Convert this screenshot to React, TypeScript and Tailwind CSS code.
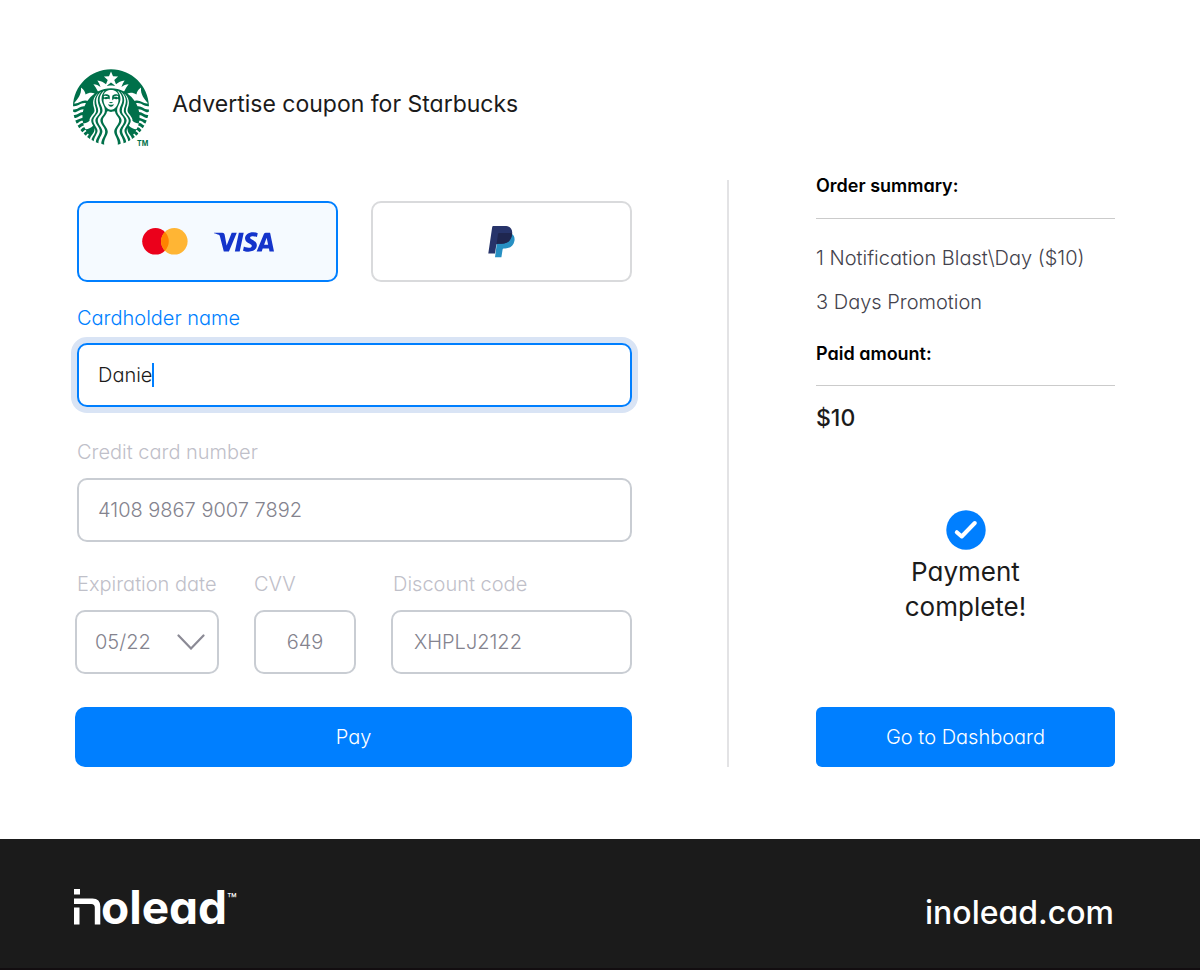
import { useState } from "react";
import { SiStarbucks, SiVisa } from "react-icons/si";

const fieldBox =
  "h-16 w-full rounded-[10px] border-2 border-[#c9cdd3] bg-white text-xl font-light text-[#84838e] outline-none";
const labelText = "text-xl leading-6 font-light text-[#bfc0c9]";

function Mastercard() {
  return (
    <svg viewBox="0 0 46 28" className="h-7 w-[46px]" aria-hidden="true">
      <circle cx="13.5" cy="13.300" r="13.3" fill="#eb001b" />
      <circle cx="32.3" cy="13.300" r="13.3" fill="#ffb534" />
      <path d="M22.9 3.900a13.3 13.3 0 0 1 0 18.8a13.3 13.3 0 0 1 0-18.8z" fill="#ff8200" />
    </svg>
  );
}

function PayPal() {
  return (
    <svg viewBox="0 0 27 32" className="h-8 w-[27px]" aria-hidden="true">
      <path d="M23.6 7.700c2.600 1.400 3.400 4.300 2.800 7.300-1 5-4.600 7.400-9.100 7.400h-1.500c-.7 0-1.100.3-1.200 1l-1.200 7.800H7l.6-4.500L9.300 14z" fill="#2790c3" />
      <path d="M5.200 0h11.400c5.400 0 8.300 2.700 7.500 8.300-.9 6.500-4.900 9.400-10.800 9.400H9.800c-.9 0-1.400.5-1.500 1.200L7 27.500H.3L4.200 1c.1-.6.500-1 1-1z" fill="#27346a" />
      <path d="M11.200 7h12.800c.1.500.1.900 0 1.500-.9 6.600-4.900 9.200-10.700 9.200H9.800c-.5 0-.9.200-1.200.5L10 8.100c.1-.7.500-1.100 1.200-1.100z" fill="#1f264f" />
    </svg>
  );
}

function BrandMark() {
  return (
    <svg viewBox="0 0 27 36" className="h-9 w-[27px]" fill="#fff" aria-hidden="true">
      <rect x="0" y="0" width="6" height="5.500" />
      <path d="M0 9.500h18.500q7.800 0 7.800 8V35.500h-5.500V18.500q0-3.600-3.600-3.600H0z" />
      <rect x="0" y="18.500" width="5.500" height="17" />
    </svg>
  );
}

export default function App() {
  const [name, setName] = useState("Danie");
  const [method, setMethod] = useState("card");
  const methodBox =
    "flex h-[81px] flex-1 items-center justify-center rounded-[10px] border-2";
  const active = "border-[#007fff] bg-[#f5faff]";
  const idle = "border-[#d9dadc] bg-white";

  return (
    <div className="min-h-screen bg-white font-['Inter','Liberation_Sans',sans-serif] text-[#1b1b1b] [font-feature-settings:'cv11']">
      <header className="flex items-start pt-[69px] pl-[73px]">
        <div className="flex items-end">
          <SiStarbucks className="size-[76px] text-[#00704a]" aria-label="Starbucks" />
          <span className="-mb-0.5 -ml-3 text-[7px] leading-[6px] font-bold text-[#00704a]">TM</span>
        </div>
        <h1 className="mt-[19px] ml-6 text-[23px] leading-8 font-normal">
          Advertise coupon for Starbucks
        </h1>
      </header>

      <main className="mt-[29px] flex pr-[85px] pl-[75px]">
        <form className="flex-1 pt-[27px]" onSubmit={(e) => e.preventDefault()}>
          <div className="flex gap-[33px] pl-0.5">
            <button
              type="button"
              aria-label="Pay by card"
              aria-pressed={method === "card"}
              onClick={() => setMethod("card")}
              className={`${methodBox} gap-[26px] ${method === "card" ? active : idle}`}
            >
              <Mastercard />
              <SiVisa className="size-[60px] text-[#1434cb]" aria-hidden="true" />
            </button>
            <button
              type="button"
              aria-label="Pay with PayPal"
              aria-pressed={method === "paypal"}
              onClick={() => setMethod("paypal")}
              className={`${methodBox} ${method === "paypal" ? active : idle}`}
            >
              <PayPal />
            </button>
          </div>

          <div className="mt-6 pl-0.5">
            <label htmlFor="holder" className="block text-xl leading-6 font-light text-[#007fff]">
              Cardholder name
            </label>
            <div className="mt-[13px] flex h-16 items-center rounded-[10px] border-2 border-[#007fff] bg-white pl-[19px] text-xl font-light ring-6 ring-[#d9e4f5]">
              <input
                id="holder"
                value={name}
                onChange={(e) => setName(e.target.value)}
                className="field-sizing-content border-r-2 border-[#007fff] leading-6 outline-none"
              />
            </div>
          </div>

          <div className="mt-[33px] pl-0.5">
            <label htmlFor="number" className={`block ${labelText}`}>
              Credit card number
            </label>
            <input
              id="number"
              defaultValue="4108 9867 9007 7892"
              className={`mt-3.5 px-[19px] ${fieldBox}`}
            />
          </div>

          <div className="mt-[30px] flex gap-[35px]">
            <div className="w-36 shrink-0">
              <label htmlFor="expiry" className={`block pl-0.5 whitespace-nowrap ${labelText}`}>
                Expiration date
              </label>
              <div className="relative mt-3.5">
                <select id="expiry" className={`appearance-none pl-[18px] ${fieldBox}`}>
                  <option>05/22</option>
                </select>
                <svg
                  viewBox="0 0 28 16"
                  className="pointer-events-none absolute top-6 right-3.5 h-4 w-7"
                  fill="none"
                  stroke="#8b8a95"
                  strokeWidth="2.200"
                  strokeLinecap="round"
                  aria-hidden="true"
                >
                  <path d="M1.500 1.500 14 14.500 26.500 1.500" />
                </svg>
              </div>
            </div>
            <div className="w-[102px] shrink-0">
              <label htmlFor="cvv" className={`block ${labelText}`}>
                CVV
              </label>
              <input
                id="cvv"
                defaultValue="649"
                className={`mt-3.5 text-center ${fieldBox}`}
              />
            </div>
            <div className="min-w-0 flex-1">
              <label htmlFor="discount" className={`block pl-0.5 ${labelText}`}>
                Discount code
              </label>
              <input
                id="discount"
                defaultValue="XHPLJ2122"
                className={`mt-3.5 px-[21px] ${fieldBox}`}
              />
            </div>
          </div>

          <button
            type="submit"
            className="mt-[33px] h-[60px] w-full rounded-[10px] bg-[#007fff] text-xl font-light text-white"
          >
            Pay
          </button>
        </form>

        <aside className="mt-1.5 ml-[95px] flex w-[388px] flex-col border-l-2 border-[#e3e3e5] pl-[87px]">
          <h2 className="-mt-1.5 text-lg leading-6 font-semibold text-black">Order summary:</h2>
          <hr className="mt-5 border-[#cbcbcb]" />
          <p className="mt-[27px] text-xl leading-6 font-light whitespace-nowrap text-[#43424c]">
            1 Notification Blast\Day ($10)
          </p>
          <p className="mt-5 text-xl leading-6 font-light text-[#43424c]">3 Days Promotion</p>
          <h2 className="mt-7 text-lg leading-6 font-semibold text-black">Paid amount:</h2>
          <hr className="mt-[19px] border-[#cbcbcb]" />
          <p className="mt-4 text-[23px] leading-8 font-medium">$10</p>

          <div className="mt-[76px] flex flex-col items-center">
            <svg viewBox="0 0 40 40" className="size-10" aria-hidden="true">
              <circle cx="20" cy="20" r="19.700" fill="#007fff" />
              <path
                d="M10.800 22.200 15.700 26.500 28.800 13"
                fill="none"
                stroke="#fff"
                strokeWidth="4"
                strokeLinecap="round"
                strokeLinejoin="round"
              />
            </svg>
            <p className="mt-1 text-center text-[26px] leading-[35px]">
              Payment
              <br />
              complete!
            </p>
          </div>

          <button
            type="button"
            className="mt-auto h-[60px] w-full rounded-md bg-[#007fff] text-xl font-light text-white"
          >
            Go to Dashboard
          </button>
        </aside>
      </main>

      <footer className="mt-[72px] flex h-[131px] items-start justify-between border-b-2 border-[#120d10] bg-[#1b1b1b] pr-[86px] pl-[74px] text-white">
        <div className="mt-[50px] flex h-9 items-start" role="img" aria-label="inolead">
          <BrandMark />
          <span className="text-[46px] leading-9 font-bold">olead</span>
          <span className="text-[16px] leading-5">™</span>
        </div>
        <a href="https://inolead.com" className="mt-[54px] text-[32px] leading-10 font-medium">
          inolead.com
        </a>
      </footer>
    </div>
  );
}
